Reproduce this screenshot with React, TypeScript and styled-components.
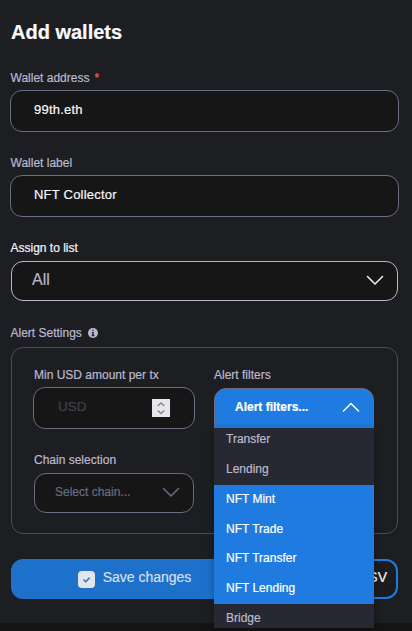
import React from "react";
import styled, { createGlobalStyle, css } from "styled-components";

const Global = createGlobalStyle`
  * { box-sizing: border-box; }
  body {
    margin: 0;
    min-height: 631px;
    background: #141414;
    font-family: "Liberation Sans", Arial, sans-serif;
    -webkit-text-stroke: 0.2px currentColor;
  }
`;

const Page = styled.div`
  height: 631px;
  background: #141414;
`;

const Modal = styled.main`
  height: 623px;
  padding: 0 13px 0 10px;
  background: #1d1e22;
  display: flex;
  flex-direction: column;
`;

const Title = styled.h1`
  margin: 0;
  padding: 20px 0 0 1px;
  height: 70px;
  font-size: 20px;
  line-height: 24px;
  font-weight: 700;
  color: #fafaff;
`;

const Field = styled.div`
  height: 85px;
  display: flex;
  flex-direction: column;
`;

const Label = styled.label<{ $bright?: boolean; $gap?: number; $inset?: number }>`
  display: flex;
  align-items: center;
  height: 16px;
  margin-bottom: ${(p) => p.$gap ?? 4}px;
  padding-left: ${(p) => p.$inset ?? 0.5}px;
  font-size: 12px;
  line-height: 16px;
  white-space: nowrap;
  color: ${(p) => (p.$bright ? "#f4f4fa" : "#bbb8cf")};
`;

const ChainLabel = styled(Label)`
  margin-top: 23px;
`;

const Required = styled.span`
  margin-left: 5px;
  color: #f45b5b;
`;

const box = css`
  display: flex;
  align-items: center;
  background: #161616;
  border: 1px solid #696d82;
  border-radius: 12px;
`;

const TextBox = styled.div`
  ${box}
  height: 42px;
  padding: 0 24px 4px 23px;
  font-size: 13px;
  letter-spacing: 0.22px;
  color: #f7f7fc;
`;

const ListSelect = styled.div`
  ${box}
  justify-content: space-between;
  height: 40px;
  margin: 0 1px;
  padding: 0 13px 2px 20px;
  border-color: #b9b7cb;
  font-size: 16px;
  color: #b9b7cc;
`;

const Panel = styled.section`
  display: grid;
  grid-template-columns: 162px 160px;
  column-gap: 19px;
  height: 187px;
  margin: 0 1px;
  padding: 19px 0 0 21px;
  border: 1px solid #4b4b5b;
  border-radius: 12px;
`;

const Column = styled.div`
  display: flex;
  flex-direction: column;
`;

const AmountBox = styled.div`
  ${box}
  justify-content: space-between;
  height: 42px;
  padding: 0 24px 3px 24px;
  font-size: 13.5px;
  color: #42424c;
`;

const Stepper = styled.span`
  display: flex;
  width: 18px;
  height: 18px;
  margin-top: 3px;
  background: #e7e6eb;
`;

const ChainSelect = styled.div`
  ${box}
  justify-content: space-between;
  height: 40px;
  margin: 0 1px;
  padding: 0 13px 2px 20px;
  font-size: 12px;
  color: #686c80;
`;

const Dropdown = styled.div`
  position: relative;
`;

const DropdownHead = styled.div`
  display: flex;
  align-items: center;
  justify-content: space-between;
  height: 40px;
  padding: 0 13px 2px 20px;
  border: 1px solid #696d82;
  border-radius: 12px 12px 0 0;
  background: #1f7be0;
  color: #fff;
  font-size: 12px;
  font-weight: 700;
`;

const Menu = styled.ul`
  position: absolute;
  z-index: 2;
  top: 40px;
  left: 0;
  width: 160px;
  height: 200px;
  margin: 0;
  padding: 0;
  overflow: hidden;
  list-style: none;
  background: #272932;
  box-shadow: 0 2px 8px rgba(0, 0, 0, 0.3);
`;

const Option = styled.li<{ $selected: boolean }>`
  height: 29.8px;
  padding-left: 12px;
  font-size: 12px;
  line-height: 28px;
  color: ${(p) => (p.$selected ? "#fff" : "#bbb8cf")};
  background: ${(p) => (p.$selected ? "#1f7be0" : "transparent")};
  &:first-child {
    height: 27px;
    line-height: 22px;
  }
`;

const Actions = styled.div`
  display: grid;
  grid-template-columns: 248px 1fr;
  gap: 12px;
  height: 40px;
  margin: 25px 1px 0;
`;

const SaveButton = styled.button`
  display: flex;
  align-items: center;
  justify-content: center;
  gap: 8px;
  padding: 0 1px 0 0;
  border: 0;
  border-radius: 12px;
  background: #1e71cb;
  color: #d9dfea;
  font: 14px "Liberation Sans", Arial, sans-serif;
`;

const SaveText = styled.span`
  margin-top: -4px;
`;

const CsvButton = styled.button`
  padding: 0 9px 4px 0;
  text-align: right;
  border: 2px solid #1f7be0;
  border-radius: 12px;
  background: #1b1c1f;
  color: #f7f7fc;
  font: 14px "Liberation Sans", Arial, sans-serif;
`;

const InfoSvg = styled.svg`
  margin: -1px 0 0 6px;
`;

const Chevron = ({ color, up = false }: { color: string; up?: boolean }) => (
  <svg width="18" height="10" viewBox="0 0 18 10" fill="none" stroke={color} strokeWidth="1.5" strokeLinecap="round" strokeLinejoin="round">
    <path d={up ? "M1.5 9 9 1.5 16.5 9" : "M1.5 1.5 9 9 16.5 1.5"} />
  </svg>
);

const options = [
  { name: "Transfer", selected: false },
  { name: "Lending", selected: false },
  { name: "NFT Mint", selected: true },
  { name: "NFT Trade", selected: true },
  { name: "NFT Transfer", selected: true },
  { name: "NFT Lending", selected: true },
  { name: "Bridge", selected: false },
];

export default function App() {
  return (
    <Page>
      <Global />
      <Modal>
        <Title>Add wallets</Title>
        <Field>
          <Label>Wallet address<Required>*</Required></Label>
          <TextBox>99th.eth</TextBox>
        </Field>
        <Field>
          <Label>Wallet label</Label>
          <TextBox>NFT Collector</TextBox>
        </Field>
        <Field>
          <Label $bright $gap={5}>Assign to list</Label>
          <ListSelect>All<Chevron color="#f1f1f5" /></ListSelect>
        </Field>
        <Label $gap={6}>
          Alert Settings
          <InfoSvg width="10" height="10" viewBox="0 0 10 10">
            <circle cx="5" cy="5" r="5" fill="#bbb8cf" />
            <path d="M5 1.7v1.4M3.9 4.6H5v2.9M3.7 7.5h2.6" stroke="#1d1e22" strokeWidth="1.3" fill="none" />
          </InfoSvg>
        </Label>
        <Panel>
          <Column>
            <Label $inset={1}>Min USD amount per tx</Label>
            <AmountBox>
              USD
              <Stepper>
                <svg width="18" height="18" viewBox="0 0 18 18" fill="none" stroke="#85858b" strokeWidth="1.5">
                  <path d="M5.7 7 9 4l3.3 3M5.7 11.5l3.3 3 3.3-3" />
                </svg>
              </Stepper>
            </AmountBox>
            <ChainLabel $inset={1} $gap={5}>Chain selection</ChainLabel>
            <ChainSelect>Select chain...<Chevron color="#696d82" /></ChainSelect>
          </Column>
          <Column>
            <Label $gap={5} $inset={0}>Alert filters</Label>
            <Dropdown>
              <DropdownHead>Alert filters...<Chevron up color="#fff" /></DropdownHead>
              <Menu>
                {options.map((o) => (
                  <Option key={o.name} $selected={o.selected}>{o.name}</Option>
                ))}
              </Menu>
            </Dropdown>
          </Column>
        </Panel>
        <Actions>
          <SaveButton>
            <svg width="17" height="17" viewBox="0 0 17 17" fill="none">
              <rect width="17" height="17" rx="4" fill="#e4e5e8" />
              <path d="m5.5 8.5 2.2 2.2 3.8-4" stroke="#1e71cb" strokeWidth="1.4" />
            </svg>
            <SaveText>Save changes</SaveText>
          </SaveButton>
          <CsvButton>Import CSV</CsvButton>
        </Actions>
      </Modal>
    </Page>
  );
}
